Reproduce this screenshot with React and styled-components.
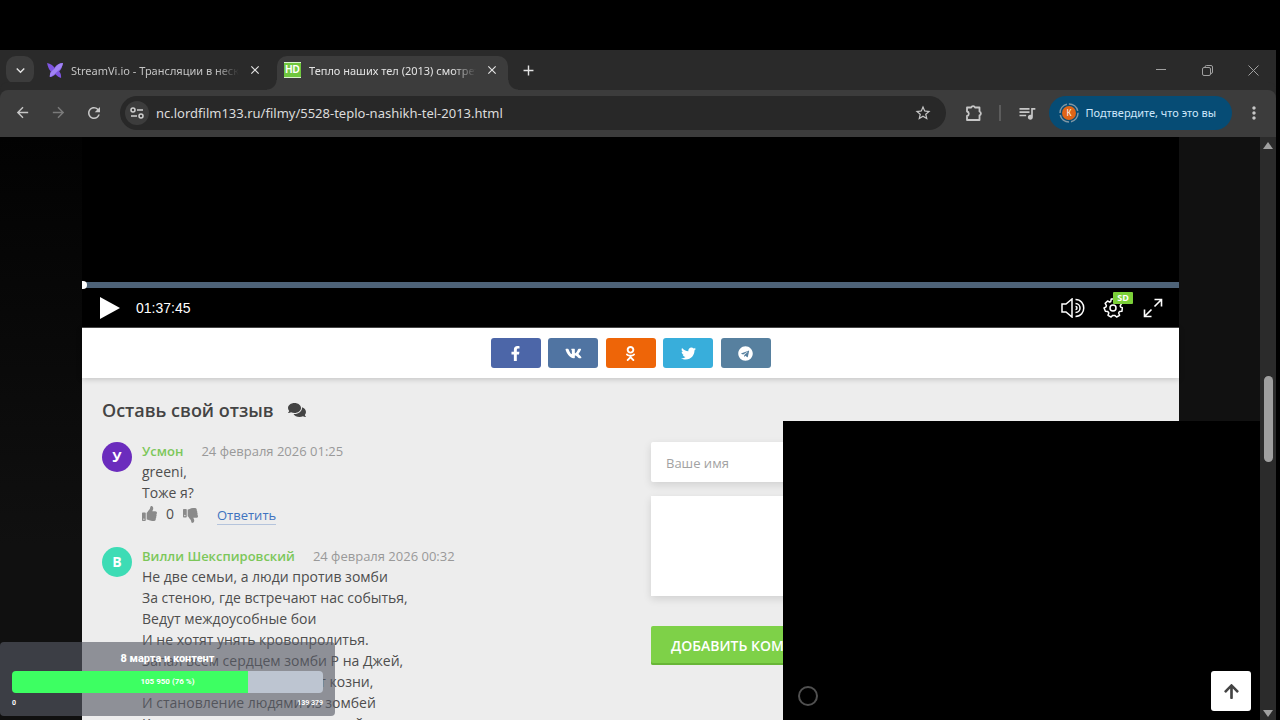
import React from "react";
import styled, { createGlobalStyle } from "styled-components";
import { MdArrowBack, MdArrowForward, MdRefresh, MdStarBorder, MdMoreVert, MdQueueMusic, MdAdd, MdClose, MdKeyboardArrowDown } from "react-icons/md";
import { FaFacebookF, FaVk, FaOdnoklassniki, FaTwitter, FaTelegram, FaComments, FaThumbsUp, FaThumbsDown, FaArrowUp } from "react-icons/fa";

const Global = createGlobalStyle`
  * { box-sizing: border-box; }
  html, body { margin: 0; height: 100%; background: #000; overflow: hidden; }
  body { font-family: "Open Sans", "Noto Sans", sans-serif; font-size: 14px; line-height: 21px; color: #4e4e4e; }
  button { border: 0; padding: 0; margin: 0; background: none; font: inherit; color: inherit; display: flex; align-items: center; justify-content: center; }
  input, textarea { font: inherit; border: 0; outline: 0; }
  svg { display: block; flex: none; }
`;

const Screen = styled.div`
  height: 100vh;
  padding: 50px 4px 0 0;
  display: flex;
  flex-direction: column;
  position: relative;
`;

/* Browser frame */
const TabStrip = styled.header`
  height: 40px;
  flex: none;
  display: flex;
  align-items: center;
  background: #2a2a2a;
  padding-left: 6px;
  color: #e3e3e3;
  font-family: "Noto Sans", sans-serif;
`;
const TabSearch = styled.button`
  width: 28px;
  height: 28px;
  border-radius: 10px;
  background: #3c3c3c;
  margin-right: 4px;
`;
const Tab = styled.div`
  align-self: flex-end;
  height: 34px;
  width: ${(p) => (p.$active ? 231 : 239)}px;
  padding: ${(p) => (p.$active ? "0 8px 6px 7px" : "0 14px 6px 9px")};
  display: flex;
  align-items: center;
  gap: 8px;
  position: relative;
  border-radius: 10px 10px 0 0;
  background: ${(p) => (p.$active ? "#3c3c3c" : "transparent")};
  color: ${(p) => (p.$active ? "#e3e3e3" : "#c4c4c4")};
  ${(p) =>
    p.$active &&
    `&::before, &::after {
      content: "";
      position: absolute;
      bottom: 0;
      width: 10px;
      height: 10px;
    }
    &::before { right: 100%; background: radial-gradient(circle at 0 0, transparent 9px, #3c3c3c 10px); }
    &::after { left: 100%; background: radial-gradient(circle at 100% 0, transparent 9px, #3c3c3c 10px); }`}
`;
const TabTitle = styled.span`
  flex: 1;
  min-width: 0;
  padding-top: 2px;
  font-size: 11px;
  line-height: 16px;
  white-space: nowrap;
  overflow: hidden;
  mask-image: linear-gradient(90deg, #000 86%, transparent);
`;
const TabClose = styled.button`
  width: 16px;
  height: 16px;
  color: #e3e3e3;
`;
const SiteBadge = styled.span`
  width: 17px;
  height: 16px;
  background: #6fc73e;
  border: solid #d9f2cb;
  border-width: 1px 0;
  color: #fff;
  font: bold 10px/14px "Liberation Sans", sans-serif;
  text-align: center;
`;
const NewTab = styled.button`
  width: 28px;
  height: 28px;
  margin-left: 6px;
`;
const WindowButtons = styled.div`
  margin-left: auto;
  display: flex;
  color: #a0a0a0;
`;
const WindowButton = styled.button`
  width: 46px;
  height: 40px;
`;
const Toolbar = styled.nav`
  height: 47px;
  flex: none;
  display: flex;
  align-items: center;
  background: #3c3c3c;
  border-radius: 8px 8px 0 0;
  box-shadow: 0 -8px 0 #2a2a2a;
  padding: 0 4px 2px;
  color: #c7c7c7;
  font-family: "Noto Sans", sans-serif;
`;
const ToolButton = styled.button`
  width: 36px;
  height: 34px;
  opacity: ${(p) => (p.$dim ? 0.45 : 1)};
`;
const AddressBar = styled.form`
  flex: 1;
  min-width: 0;
  height: 34px;
  margin: 0 10px 0 8px;
  padding: 0 5px 0 5px;
  border-radius: 17px;
  background: #282828;
  display: flex;
  align-items: center;
`;
const SiteInfo = styled.button`
  width: 24px;
  height: 24px;
  border-radius: 12px;
  background: #3c3c3c;
`;
const UrlInput = styled.input`
  flex: 1;
  min-width: 0;
  margin-left: 7px;
  padding: 0;
  background: transparent;
  color: #dcdcdc;
  font-size: 13px;
  line-height: 20px;
`;
const Divider = styled.span`
  width: 2px;
  height: 16px;
  margin: 0 8px 0 7px;
  background: #5c5c5c;
`;
const ProfileButton = styled.button`
  height: 34px;
  border-radius: 17px;
  padding: 0 16px 0 10px;
  margin: 0 4px;
  gap: 7px;
  background: #064c75;
  color: #cde7fb;
  font-size: 11px;
  white-space: nowrap;
`;

/* Web page */
const Viewport = styled.div`
  flex: 1;
  min-height: 0;
  display: flex;
`;
const Page = styled.main`
  flex: 1;
  min-width: 0;
  overflow: hidden;
  padding: 0 81px 0 82px;
  background:
    linear-gradient(180deg, #020202, #101010 70%) left / 50% 100% no-repeat,
    #111;
`;
const Scrollbar = styled.div`
  width: 16px;
  display: flex;
  flex-direction: column;
  align-items: center;
  justify-content: space-between;
  padding: 5px 0 3px;
  background: #2b2b2b;
`;
const ScrollTrack = styled.div`
  flex: 1;
  padding-top: 227px;
`;
const ScrollThumb = styled.div`
  width: 9px;
  height: 86px;
  border-radius: 5px;
  background: #9f9f9f;
`;

const Player = styled.section`
  background: #000;
  padding-top: 145px;
  border-bottom: 1px solid #4b4b4b;
`;
const Progress = styled.div`
  height: 6px;
  background: #4e6378;
  position: relative;
  &::before {
    content: "";
    position: absolute;
    left: 0;
    top: -1px;
    width: 5px;
    height: 8px;
    border-radius: 0 5px 5px 0;
    background: #fff;
  }
`;
const Controls = styled.div`
  height: 39px;
  display: flex;
  align-items: center;
  padding: 0 15px 0 17px;
  color: #fff;
  font: 14px/20px "Liberation Sans", sans-serif;
`;
const Time = styled.span`
  margin: 0 auto 0 16px;
`;
const Control = styled.button`
  width: ${(p) => p.$w || 24}px;
  height: 24px;
  margin-left: ${(p) => p.$gap || 0}px;
  position: relative;
`;
const QualityBadge = styled.span`
  position: absolute;
  left: 10px;
  top: -4px;
  width: 20px;
  height: 12px;
  border-radius: 1px;
  background: #7bd038;
  font: 700 9px/12px "Open Sans", sans-serif;
`;
const ShareBar = styled.section`
  height: 50px;
  display: flex;
  align-items: center;
  justify-content: center;
  background: #fff;
  box-shadow: 0 1px 6px rgba(0, 0, 0, 0.2);
  position: relative;
`;
const ShareList = styled.div`
  width: 280px;
  display: flex;
  justify-content: space-between;
`;
const ShareButton = styled.button`
  width: 50px;
  height: 30px;
  border-radius: 3px;
  background: ${(p) => p.$color};
  color: #fff;
`;
const Reviews = styled.section`
  background: #ededed;
  padding: 20px 20px 0;
  min-height: 700px;
`;
const ReviewsTitle = styled.h2`
  margin: 0 0 19px;
  display: flex;
  align-items: center;
  gap: 14px;
  font-size: 18px;
  line-height: 24px;
  font-weight: 600;
  color: #444;
`;
const Columns = styled.div`
  display: grid;
  grid-template-columns: 1fr 1fr;
  gap: 41px;
  align-items: start;
`;
const Comment = styled.article`
  display: grid;
  grid-template-columns: 30px 1fr;
  gap: 10px;
  margin-bottom: 18px;
`;
const Avatar = styled.div`
  width: 30px;
  height: 30px;
  margin-top: 1px;
  border-radius: 50%;
  background: ${(p) => p.$color};
  color: #fff;
  font-weight: 700;
  line-height: 30px;
  text-align: center;
`;
const CommentHead = styled.div`
  display: flex;
  gap: 18px;
  height: 20px;
  font-size: 13px;
`;
const Author = styled.span`
  color: #7cc75a;
  font-weight: 600;
`;
const Posted = styled.time`
  color: #999;
`;
const CommentText = styled.p`
  margin: 0;
  font-size: 14px;
  white-space: pre-line;
`;
const Actions = styled.div`
  display: flex;
  align-items: flex-start;
  height: 25px;
  color: #4e4e4e;
`;
const Vote = styled.button`
  height: 20px;
  padding-top: ${(p) => (p.$down ? 4 : 0)}px;
  color: #8a8a8a;
`;
const VoteCount = styled.span`
  width: 26px;
  text-align: center;
`;
const Reply = styled.a`
  margin: 3px 0 0 19px;
  font-size: 13px;
  line-height: 18px;
  color: #3f73c0;
  text-decoration: none;
  border-bottom: 1px solid #b5c4dc;
`;
const CommentForm = styled.form`
  display: flex;
  flex-direction: column;
  align-items: flex-start;
  padding-top: 1px;
`;
const NameField = styled.input`
  width: 100%;
  height: 40px;
  padding: 2px 15px 0;
  border-radius: 2px;
  background: #fff;
  box-shadow: 0 3px 8px rgba(0, 0, 0, 0.12);
  font-size: 13px;
  &::placeholder { color: #a2a2a2; opacity: 1; }
`;
const MessageField = styled.textarea`
  width: 100%;
  height: 100px;
  margin: 14px 0 30px;
  padding: 15px;
  resize: none;
  background: #fff;
  box-shadow: 0 3px 8px rgba(0, 0, 0, 0.12);
`;
const Submit = styled.button`
  height: 39px;
  padding: 0 20px;
  border-radius: 2px;
  background: #7ed148;
  box-shadow: inset 0 -2px 0 #68b637;
  color: #fff;
  font-weight: 600;
  white-space: nowrap;
`;

/* Layers over the page */
const VideoTile = styled.aside`
  position: absolute;
  right: 20px;
  bottom: 0;
  width: 477px;
  height: 299px;
  background: #000;
  padding: 9px;
  display: flex;
  align-items: flex-end;
  justify-content: space-between;
`;
const Ring = styled.span`
  width: 20px;
  height: 20px;
  margin: 0 0 5px 6px;
  border: 2px solid #505050;
  border-radius: 50%;
`;
const ToTop = styled.button`
  width: 40px;
  height: 40px;
  border-radius: 3px;
  background: #fff;
  color: #444;
`;
const Goal = styled.aside`
  position: absolute;
  left: 0;
  bottom: 4px;
  width: 335px;
  height: 74px;
  padding: 8px 12px 0;
  border-radius: 4px;
  background: rgba(87, 90, 101, 0.63);
  color: #fff;
  font-family: Roboto, sans-serif;
  text-align: center;
`;
const GoalTitle = styled.div`
  font-size: 11px;
  line-height: 18px;
  font-weight: 800;
  margin-bottom: 3px;
`;
const GoalBar = styled.div`
  height: 22px;
  border-radius: 4px;
  background: linear-gradient(90deg, #3dff62 76%, #bdc5d1 76%);
  font-size: 8px;
  line-height: 22px;
  font-weight: 700;
`;
const GoalScale = styled.div`
  display: flex;
  justify-content: space-between;
  font-size: 7px;
  line-height: 20px;
  font-weight: 700;
`;

const StreamLogo = () => (
  <svg width="16" height="15" viewBox="0 0 17 16">
    <path d="M0 0c4 1 6 2 8 5 2-3 5-5 9-5-1 5-2 7-4 9 2 2 2 4 2 7-3-1-4-2-6-4-2 2-4 3-6 3 0-2 0-4 1-6C2 7 1 4 0 0Z" fill="#7f55e2" />
    <path d="M8 6c2-3 5-6 9-6-1 5-3 7-6 9-2 2-5 5-8 6 0-4 1-6 5-9Z" fill="#a184f4" />
  </svg>
);
const TuneIcon = () => (
  <svg width="14" height="12" viewBox="0 0 14 12" fill="none" stroke="#d0d0d0" strokeWidth="1.5">
    <circle cx="3" cy="3" r="2" /><path d="M7 3h6M1 9h6" /><circle cx="11" cy="9" r="2" />
  </svg>
);
const PuzzleIcon = () => (
  <svg width="18" height="18" viewBox="0 0 18 18" fill="none" stroke="currentColor" strokeWidth="1.8" strokeLinejoin="round">
    <path d="M2 3.500h4.200a2 2 0 0 1 3.800 0h4.500v4a2 2 0 0 1 0 3.800v4.700H2v-4a2.300 2.300 0 0 0 0-4.500z" />
  </svg>
);
const VolumeIcon = () => (
  <svg width="24" height="20" viewBox="0 0 24 20" fill="none" stroke="#fff" strokeWidth="1.5">
    <path d="M1 6h4l6-5v18l-6-5H1zM14.500 1.500c11 0 11 17 0 17M14.500 5.500c6 0 6 9 0 9M14.500 8.500c2 0 2 3 0 3" />
  </svg>
);
const GearIcon = () => (
  <svg width="20" height="20" viewBox="0 0 20 20" fill="none" stroke="#fff" strokeWidth="1.5" strokeLinejoin="round">
    <path d="M8.2 1h3.6l.5 2.5 1.7.8L16.2 3l2.3 2.7-1.3 2.2.4 1.2 1.8.7-.5 3.5-2.5.3-.8 1.4 1 2.3-3 1.7-1.9-1.6h-2l-1.6 1.6-3.1-1.7.8-2.3-.9-1.4-2.5-.3L1 10l2.1-1.1.3-1.3-1.2-2.2L4.600 3l2.100 1.200 1.100-.7z" />
    <circle cx="10" cy="10" r="3" />
  </svg>
);
const FullscreenIcon = () => (
  <svg width="20" height="20" viewBox="0 0 20 20" fill="none" stroke="#fff" strokeWidth="1.6">
    <path d="M11.500 1.500h7v7M18.500 1.500l-7 7M1.500 11.500v7h7M1.500 18.500l7-7" />
  </svg>
);

const shares = [
  ["Facebook", "#4c66a8", FaFacebookF],
  ["ВКонтакте", "#5074a2", FaVk],
  ["Одноклассники", "#ee6508", FaOdnoklassniki],
  ["Twitter", "#38aedb", FaTwitter],
  ["Telegram", "#57809f", FaTelegram],
];

const comments = [
  { name: "Усмон", letter: "У", color: "#6b2cbd", date: "24 февраля 2026 01:25", text: "greeni,\nТоже я?", votes: 0 },
  {
    name: "Вилли Шекспировский", letter: "В", color: "#3ddcb5", date: "24 февраля 2026 00:32",
    text: "Не две семьи, а люди против зомби\nЗа стеною, где встречают нас событья,\nВедут междоусобные бои\nИ не хотят унять кровопролитья.\nЗапал всем сердцем зомби Р на Джей,\nНо им судьба опять плетёт козни,\nИ становление людями из зомбей\nКонец несчастью семьям людей",
    votes: 0,
  },
];

export default function App() {
  return (
    <Screen>
      <Global />
      <TabStrip>
        <TabSearch aria-label="Поиск вкладок"><MdKeyboardArrowDown size={17} /></TabSearch>
        <Tab>
          <StreamLogo />
          <TabTitle>StreamVi.io - Трансляции в несколько</TabTitle>
          <TabClose aria-label="Закрыть"><MdClose size={14} /></TabClose>
        </Tab>
        <Tab $active>
          <SiteBadge>HD</SiteBadge>
          <TabTitle>Тепло наших тел (2013) смотреть</TabTitle>
          <TabClose aria-label="Закрыть"><MdClose size={14} /></TabClose>
        </Tab>
        <NewTab aria-label="Новая вкладка"><MdAdd size={17} /></NewTab>
        <WindowButtons>
          <WindowButton aria-label="Свернуть">
            <svg width="10" height="10" viewBox="0 0 10 10" stroke="currentColor"><path d="M0 4.500h10" /></svg>
          </WindowButton>
          <WindowButton aria-label="Развернуть">
            <svg width="11" height="11" viewBox="0 0 11 11" fill="none" stroke="currentColor"><rect x=".5" y="2.500" width="8" height="8" rx="1.500" /><path d="M3 2.500V2Q3 .5 4.500.5H9Q10.500.5 10.500 2v5Q10.500 8.500 9 8.500" /></svg>
          </WindowButton>
          <WindowButton aria-label="Закрыть окно">
            <svg width="11" height="11" viewBox="0 0 11 11" stroke="currentColor"><path d="M.5.5l10 10M10.500.5l-10 10" /></svg>
          </WindowButton>
        </WindowButtons>
      </TabStrip>
      <Toolbar>
        <ToolButton aria-label="Назад"><MdArrowBack size={17} /></ToolButton>
        <ToolButton $dim aria-label="Вперёд"><MdArrowForward size={17} /></ToolButton>
        <ToolButton aria-label="Обновить"><MdRefresh size={18} /></ToolButton>
        <AddressBar>
          <SiteInfo type="button" aria-label="Сведения о сайте"><TuneIcon /></SiteInfo>
          <UrlInput aria-label="Адрес" defaultValue="nc.lordfilm133.ru/filmy/5528-teplo-nashikh-tel-2013.html" />
          <ToolButton type="button" aria-label="В закладки"><MdStarBorder size={18} /></ToolButton>
        </AddressBar>
        <ToolButton aria-label="Расширения"><PuzzleIcon /></ToolButton>
        <Divider />
        <ToolButton aria-label="Медиа"><MdQueueMusic size={20} /></ToolButton>
        <ProfileButton>
          <svg width="20" height="20" viewBox="0 0 20 20">
            <circle cx="10" cy="10" r="9" fill="none" stroke="#8097a5" strokeWidth="1.500" strokeDasharray="12 2" />
            <circle cx="10" cy="10" r="7" fill="#df6518" />
            <text x="10" y="13" textAnchor="middle" fontSize="8" fill="#fff">К</text>
          </svg>
          Подтвердите, что это вы
        </ProfileButton>
        <ToolButton aria-label="Меню"><MdMoreVert size={20} /></ToolButton>
      </Toolbar>
      <Viewport>
        <Page>
          <Player>
            <Progress />
            <Controls>
              <Control $w={21} aria-label="Воспроизвести">
                <svg width="20" height="22" viewBox="0 0 20 22" fill="#fff"><path d="M0 0l20 11L0 22z" /></svg>
              </Control>
              <Time>01:37:45</Time>
              <Control aria-label="Громкость"><VolumeIcon /></Control>
              <Control $w={20} $gap={18} aria-label="Качество"><GearIcon /><QualityBadge>SD</QualityBadge></Control>
              <Control $w={22} $gap={19} aria-label="Полный экран"><FullscreenIcon /></Control>
            </Controls>
          </Player>
          <ShareBar>
            <ShareList>
              {shares.map(([name, color, Icon]) => (
                <ShareButton key={name} $color={color} aria-label={name}><Icon size={name === "ВКонтакте" ? 17 : 15} /></ShareButton>
              ))}
            </ShareList>
          </ShareBar>
          <Reviews>
            <ReviewsTitle>Оставь свой отзыв <FaComments size={18} /></ReviewsTitle>
            <Columns>
              <div>
                {comments.map((c) => (
                  <Comment key={c.name}>
                    <Avatar $color={c.color}>{c.letter}</Avatar>
                    <div>
                      <CommentHead><Author>{c.name}</Author><Posted>{c.date}</Posted></CommentHead>
                      <CommentText>{c.text}</CommentText>
                      <Actions>
                        <Vote aria-label="Нравится"><FaThumbsUp size={15} /></Vote>
                        <VoteCount>{c.votes}</VoteCount>
                        <Vote $down aria-label="Не нравится"><FaThumbsDown size={15} /></Vote>
                        <Reply href="#reply">Ответить</Reply>
                      </Actions>
                    </div>
                  </Comment>
                ))}
              </div>
              <CommentForm>
                <NameField aria-label="Ваше имя" placeholder="Ваше имя" />
                <MessageField aria-label="Комментарий" />
                <Submit type="button">ДОБАВИТЬ КОММЕНТАРИЙ</Submit>
              </CommentForm>
            </Columns>
          </Reviews>
        </Page>
        <Scrollbar>
          <svg width="10" height="7" viewBox="0 0 10 7" fill="#9f9f9f"><path d="M5 0l5 7H0z" /></svg>
          <ScrollTrack><ScrollThumb /></ScrollTrack>
          <svg width="10" height="7" viewBox="0 0 10 7" fill="#9f9f9f"><path d="M0 0h10L5 7z" /></svg>
        </Scrollbar>
      </Viewport>
      <VideoTile>
        <Ring />
        <ToTop aria-label="Наверх"><FaArrowUp size={17} /></ToTop>
      </VideoTile>
      <Goal>
        <GoalTitle>8 марта и контент</GoalTitle>
        <GoalBar>105 950 (76 %)</GoalBar>
        <GoalScale><span>0</span><span>139 379</span></GoalScale>
      </Goal>
    </Screen>
  );
}
